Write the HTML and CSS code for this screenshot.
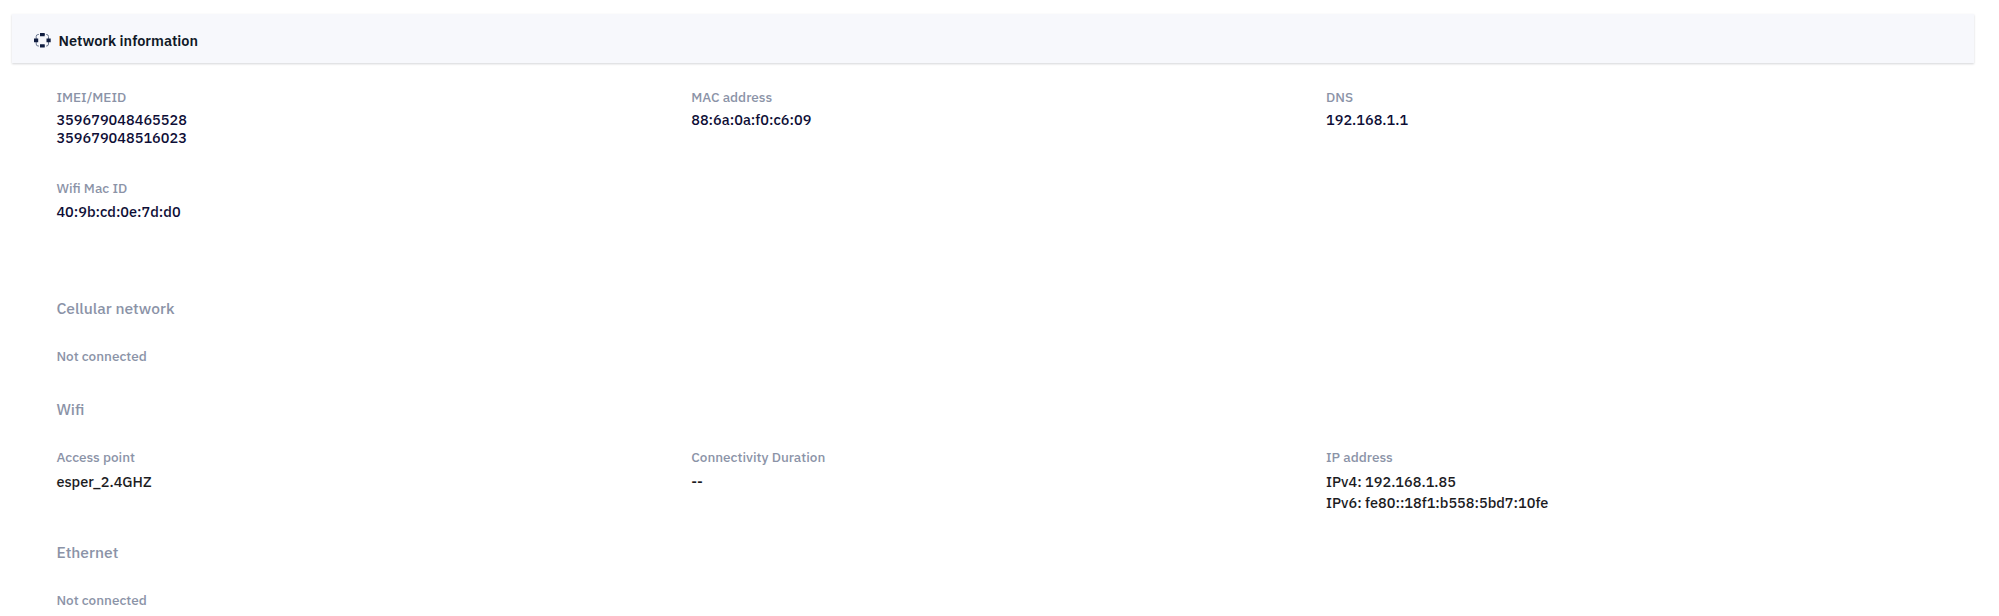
FILE: index.html
```html
<!DOCTYPE html>
<html lang="en"><head><meta charset="utf-8"><title>Network information</title>
<link rel="stylesheet" href="styles.css"></head><body>
<main class="panel">
<header class="head">
<svg class="icon" viewBox="0 0 18 16"><rect x="3.2" y="2.5" width="12.3" height="11.5" rx="2" fill="none" stroke="#6c7890" stroke-width="1"/><path fill="#f7f8fc" d="M6 0h1v5H6zM12 0h1v5h-1zM6 11.5h1v5H6zM12 11.5h1v5h-1z"/><path fill="#101d40" d="M7 1h4.7v3.2H7zM7 12.2h4.7v3.2H7zM1 6.4h4.2v3.8H1zM13.5 6.4h4.2v3.8h-4.2z"/></svg>
<h1 class="title">Network information</h1></header>
<div class="grid ids">
<div class="cell"><div class="label">IMEI/MEID</div><div class="value">359679048465528</div><div class="value">359679048516023</div></div>
<div class="cell"><div class="label">MAC address</div><div class="value">88:6a:0a:f0:c6:09</div></div>
<div class="cell"><div class="label">DNS</div><div class="value">192.168.1.1</div></div>
</div>
<div class="cell wifimac"><div class="label">Wifi Mac ID</div><div class="value">40:9b:cd:0e:7d:d0</div></div>
<h2 class="section cellular">Cellular network</h2>
<div class="label status">Not connected</div>
<h2 class="section wifi">Wifi</h2>
<div class="grid ap">
<div class="cell"><div class="label">Access point</div><div class="value dark">esper_2.4GHZ</div></div>
<div class="cell"><div class="label">Connectivity Duration</div><div class="value dark">--</div></div>
<div class="cell"><div class="label">IP address</div><div class="value dark">IPv4: 192.168.1.85</div><div class="value dark">IPv6: fe80::18f1:b558:5bd7:10fe</div></div>
</div>
<h2 class="section ethernet">Ethernet</h2>
<div class="label status">Not connected</div>
</main>
</body></html>
```
FILE: styles.css
```css
*{box-sizing:border-box}
body{margin:0;background:#fff;font-family:"IBM Plex Sans",Roboto,sans-serif}
.panel{padding:14px 25px 0 12px}
.head{display:flex;align-items:center;height:49px;padding-left:21px;background:#f7f8fc;box-shadow:0 1px 2px rgba(40,45,60,.2)}
.icon{width:18px;height:16px;margin-top:3px}
.title{margin:4px 0 0 7.5px;font-size:14.5px;line-height:18px;font-weight:600;color:#101827}
.grid{display:grid;grid-template-columns:634.8px 634.8px 1fr}
.grid,.wifimac,.section,.label.status{margin-left:44.4px}
.ids{margin-top:25px}
.label{font-size:13.55px;line-height:18px;font-weight:500;color:#8b93a7}
.value{font-size:14.5px;line-height:18px;font-weight:500;color:#0e0e36}
.label + .value{margin-top:5px}
.wifimac{margin-top:32px}
.wifimac .label + .value{margin-top:6px}
.section{margin-top:0;margin-bottom:0;font-size:15.6px;line-height:20px;font-weight:500;color:#8b93a7}
.cellular{margin-top:77px}
.section + .status{margin-top:29px}
.wifi{margin-top:34px}
.ap{margin-top:29px}
.dark{color:#1c1c1f;line-height:21px}
.ap .label + .value{margin-top:5px}
.ethernet{margin-top:29px}
```
